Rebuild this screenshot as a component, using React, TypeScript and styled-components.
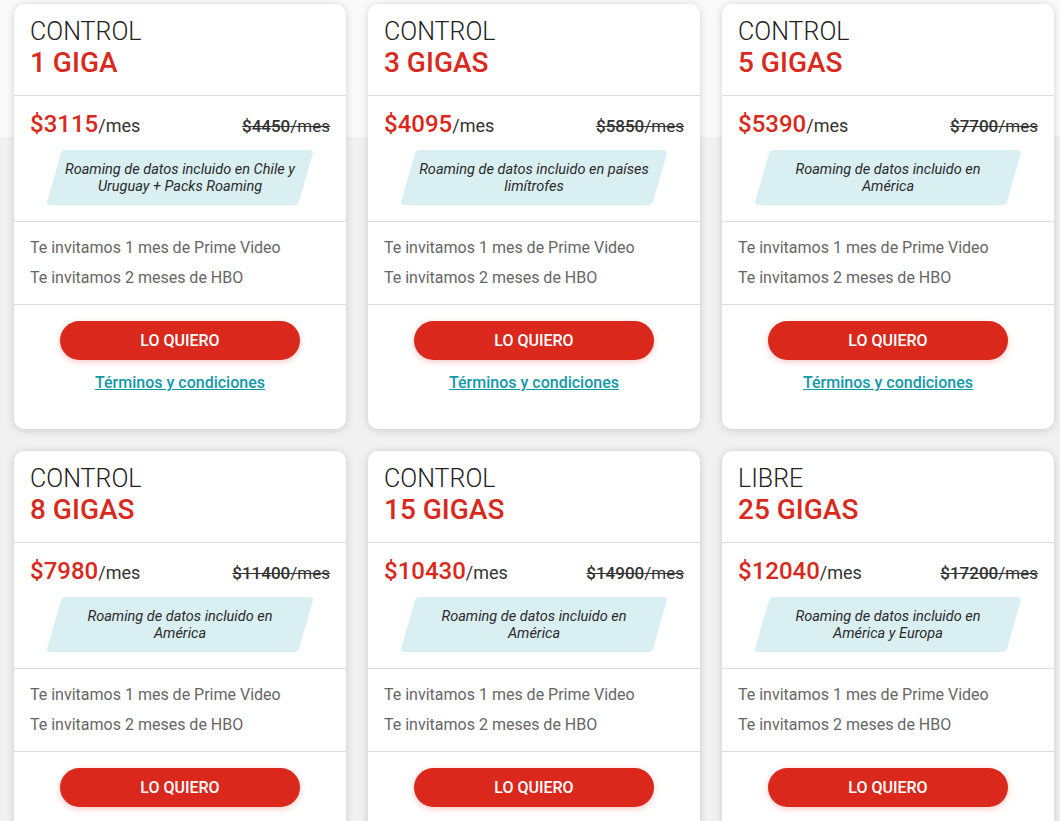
import * as React from "react";
import styled, { createGlobalStyle } from "styled-components";

const GlobalStyle = createGlobalStyle`
  html, body {
    margin: 0;
    padding: 0;
  }
  body {
    font-family: Roboto, "Liberation Sans", Arial, sans-serif;
    background: linear-gradient(to bottom, #fafafa 0, #fafafa 137px, #f1f1f1 137px);
    min-height: 821px;
  }
`;

const SGrid = styled.div`
  display: grid;
  grid-template-columns: repeat(3, 332px);
  column-gap: 22px;
  row-gap: 22px;
  padding: 4px 6px 0 14px;
`;

const SCard = styled.div`
  background: #fff;
  border-radius: 10px;
  box-shadow: 0 1px 8px rgba(0, 0, 0, 0.16);
  overflow: hidden;
  display: flex;
  flex-direction: column;
`;

const SHeader = styled.div`
  padding: 13px 16px 16px;
  border-bottom: 1px solid #dcdcdc;
`;

const SKind = styled.div`
  font-size: 25px;
  line-height: 30px;
  font-weight: 300;
  color: #222;
`;

const SData = styled.div`
  font-size: 28px;
  line-height: 32px;
  font-weight: 500;
  color: #da291c;
`;

const SPriceSection = styled.div`
  padding: 13px 16px 16px;
  border-bottom: 1px solid #dcdcdc;
`;

const SPriceRow = styled.div`
  display: flex;
  justify-content: space-between;
  align-items: baseline;
  height: 30px;
  line-height: 30px;
  margin-bottom: 11px;
`;

const SPrice = styled.span`
  font-size: 24px;
  font-weight: 500;
  color: #da291c;
`;

const SPer = styled.span`
  font-size: 18px;
  font-weight: 400;
  color: #333;
`;

const SOldPrice = styled.span`
  font-size: 17px;
  color: #333;
  text-decoration: line-through;
  & b {
    font-weight: 500;
  }
`;

const SBadge = styled.div`
  position: relative;
  width: 252px;
  height: 55px;
  margin: 0 auto;
  display: flex;
  align-items: center;
  justify-content: center;
  text-align: center;
  &::before {
    content: "";
    position: absolute;
    inset: 0;
    background: #daeff2;
    border-radius: 4px;
    transform: skewX(-16deg);
  }
`;

const SBadgeText = styled.span`
  position: relative;
  font-size: 14.5px;
  line-height: 17px;
  font-style: italic;
  color: #2a2a2a;
  padding: 0 10px;
`;

const SBenefits = styled.ul`
  list-style: none;
  margin: 0;
  padding: 11px 16px;
  border-bottom: 1px solid #dcdcdc;
`;

const SBenefit = styled.li`
  font-size: 16px;
  line-height: 30px;
  color: #666;
`;

const SFooter = styled.div`
  display: flex;
  flex-direction: column;
  align-items: center;
  padding: 16px 16px 36px;
`;

const SButton = styled.button`
  width: 240px;
  height: 39px;
  border: none;
  border-radius: 20px;
  background: #da291c;
  color: #fff;
  font-family: Roboto, "Liberation Sans", Arial, sans-serif;
  font-size: 16px;
  font-weight: 500;
  cursor: pointer;
  box-shadow: 0 2px 6px rgba(218, 41, 28, 0.25);
`;

const SLink = styled.a`
  margin-top: 13px;
  font-size: 16px;
  line-height: 20px;
  font-weight: 500;
  color: #1199a9;
  text-decoration: underline;
  cursor: pointer;
`;

interface IPlan {
  kind: string;
  data: string;
  price: string;
  oldPrice: string;
  roaming: string;
}

const plans: IPlan[] = [
  {
    kind: "CONTROL",
    data: "1 GIGA",
    price: "$3115",
    oldPrice: "$4450",
    roaming: "Roaming de datos incluido en Chile y Uruguay + Packs Roaming"
  },
  {
    kind: "CONTROL",
    data: "3 GIGAS",
    price: "$4095",
    oldPrice: "$5850",
    roaming: "Roaming de datos incluido en países limítrofes"
  },
  {
    kind: "CONTROL",
    data: "5 GIGAS",
    price: "$5390",
    oldPrice: "$7700",
    roaming: "Roaming de datos incluido en América"
  },
  {
    kind: "CONTROL",
    data: "8 GIGAS",
    price: "$7980",
    oldPrice: "$11400",
    roaming: "Roaming de datos incluido en América"
  },
  {
    kind: "CONTROL",
    data: "15 GIGAS",
    price: "$10430",
    oldPrice: "$14900",
    roaming: "Roaming de datos incluido en América"
  },
  {
    kind: "LIBRE",
    data: "25 GIGAS",
    price: "$12040",
    oldPrice: "$17200",
    roaming: "Roaming de datos incluido en América y Europa"
  }
];

function PlanCard({ plan }: { plan: IPlan }) {
  return (
    <SCard>
      <SHeader>
        <SKind>{plan.kind}</SKind>
        <SData>{plan.data}</SData>
      </SHeader>
      <SPriceSection>
        <SPriceRow>
          <span>
            <SPrice>{plan.price}</SPrice>
            <SPer>/mes</SPer>
          </span>
          <SOldPrice>
            <b>{plan.oldPrice}</b>/mes
          </SOldPrice>
        </SPriceRow>
        <SBadge>
          <SBadgeText>{plan.roaming}</SBadgeText>
        </SBadge>
      </SPriceSection>
      <SBenefits>
        <SBenefit>Te invitamos 1 mes de Prime Video</SBenefit>
        <SBenefit>Te invitamos 2 meses de HBO</SBenefit>
      </SBenefits>
      <SFooter>
        <SButton>LO QUIERO</SButton>
        <SLink>Términos y condiciones</SLink>
      </SFooter>
    </SCard>
  );
}

export default function App() {
  return (
    <>
      <GlobalStyle />
      <SGrid>
        {plans.map((plan) => (
          <PlanCard key={plan.data} plan={plan} />
        ))}
      </SGrid>
    </>
  );
}
